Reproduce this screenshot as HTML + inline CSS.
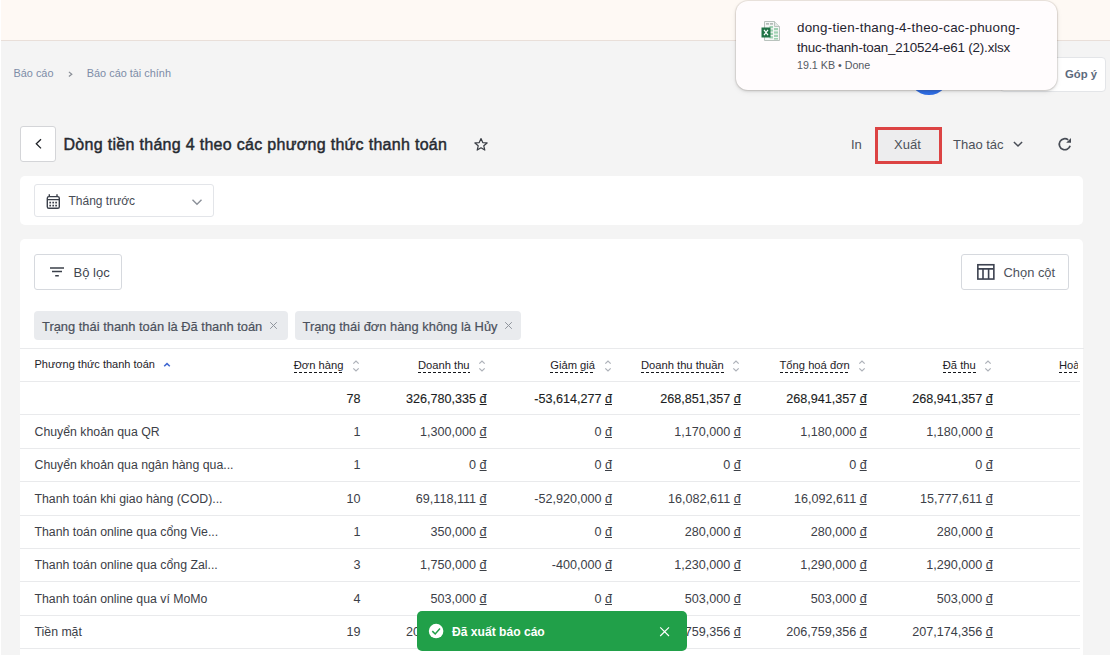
<!DOCTYPE html>
<html><head><meta charset="utf-8">
<style>
*{box-sizing:border-box;margin:0;padding:0}
html,body{width:1110px;height:655px;overflow:hidden}
body{position:relative;background:#f4f4f4;font-family:"Liberation Sans",sans-serif;color:#2a2e35}
.a{position:absolute}
.t{position:absolute;white-space:nowrap;line-height:1}
#strip{left:0;top:0;width:1px;height:655px;background:#fff}
#banner{left:1px;top:0;width:1109px;height:41px;background:#fef9f4;border-bottom:1px solid #e9dfd9}
.crumb{color:#7d8ca7;font-size:10.9px}
#gop{left:1000px;top:57px;width:106px;height:35px;background:#fff;border:1px solid #e3e5e8;border-radius:4px}
#gopt{left:1065px;top:68.5px;font-size:11.3px;font-weight:700;color:#5c6a7c}
#blue{left:907.6px;top:53px;width:42px;height:42px;border-radius:50%;background:#2f6de4}
#popup{left:736px;top:1px;width:321px;height:89px;background:#fffcfd;border-radius:12px;box-shadow:0 0 0 1px rgba(120,100,80,.10),0 1px 3px rgba(0,0,0,.18),0 2px 6px rgba(0,0,0,.06)}
.pl{color:#1f2430;font-size:13.4px}
#back{left:20px;top:126px;width:36px;height:36px;background:#fff;border:1px solid #d4d5d8;border-radius:3px}
#title{left:63.5px;font-size:16px;font-weight:400;letter-spacing:0.3px;-webkit-text-stroke:0.45px #262a31;color:#262a31}
.act{font-size:13px;color:#4c5159}
#xbox{left:875px;top:127px;width:67px;height:37px;border:3px solid #dc4343;background:#ededee}
.card{background:#fff;border-radius:5px}
#card1{left:20px;top:176px;width:1063px;height:49px}
#dd{left:34px;top:184px;width:180px;height:33px;border:1px solid #e3e5e9;border-radius:3px;background:#fff}
#card2{left:20px;top:239px;width:1063px;height:440px}
.btn{background:#fff;border:1px solid #d6d9de;border-radius:3px}
#fbtn{left:34px;top:254px;width:88px;height:36px}
#cbtn{left:961px;top:254px;width:108px;height:36px}
.chip{background:#e9ebee;border-radius:4px;height:28.5px;top:311.3px}
.chipt{font-size:12.9px;color:#4b515c;-webkit-text-stroke:0.2px #4b515c}
.chipx{font-size:13px;color:#8b9099}
.hl{background:#e9eaec;height:1px}
.hd{font-size:11.2px;color:#1e2228}
.hdr{padding-bottom:2px;background:repeating-linear-gradient(90deg,#15171b 0 3px,transparent 3px 5px) left bottom/100% 1px no-repeat}
.dash{height:1px;background:repeating-linear-gradient(90deg,#1e2228 0 3px,transparent 3px 4px)}
.num{font-size:12.6px;color:#3c4047;text-align:right}
.rt{font-size:12.3px;color:#3c4047}
.tot{color:#1b1d22;-webkit-text-stroke:0.12px #1b1d22}
u{text-decoration:underline;text-decoration-thickness:1px;text-underline-offset:0.8px}
#toast{left:417px;top:611px;width:270px;height:39.5px;background:#21a049;border-radius:5px}
</style></head><body>
<div id="strip" class="a"></div>
<div id="banner" class="a"></div>

<!-- breadcrumb -->
<div class="t crumb" style="left:13.5px;top:68.2px">Báo cáo</div>
<svg class="a" style="left:64px;top:68px" width="12" height="12" viewBox="0 0 12 12"><path d="M4.9 3.9 L7.8 6.2 L4.9 8.5" fill="none" stroke="#8a8f97" stroke-width="1.2"/></svg>
<div class="t crumb" style="left:86.8px;top:68.2px">Báo cáo tài chính</div>

<div id="gop" class="a"></div>
<div id="gopt" class="t">Góp ý</div>
<div id="blue" class="a"></div>

<!-- popup -->
<div id="popup" class="a"></div>

<!-- header row -->
<div id="back" class="a"></div>
<div id="title" class="t" style="top:136.9px">Dòng tiền tháng 4 theo các phương thức thanh toán</div>

<div class="t act" style="left:851px;top:138px">In</div>
<div id="xbox" class="a"></div>
<div class="t act" style="left:894px;top:138px">Xuất</div>
<div class="t act" style="left:953px;top:138px">Thao tác</div>

<div id="card1" class="a card"></div>
<div id="dd" class="a"></div>
<div class="t" style="left:68.5px;top:195px;font-size:12px;color:#474c55">Tháng trước</div>

<div id="card2" class="a card"></div>
<div id="fbtn" class="a btn"></div>
<div class="t" style="left:73.5px;top:266px;font-size:13px;color:#41464f">Bộ lọc</div>
<div id="cbtn" class="a btn"></div>
<div class="t" style="left:1003.5px;top:266.5px;font-size:12.9px;color:#4d525b">Chọn cột</div>

<div class="a chip" style="left:34px;width:254px"></div>
<div class="t chipt" style="left:42px;top:321px">Trạng thái thanh toán là Đã thanh toán</div>
<div class="a chip" style="left:295px;width:226px"></div>
<div class="t chipt" style="left:302.5px;top:321px">Trạng thái đơn hàng không là Hủy</div>


<!-- popup content -->
<svg class="a" style="left:760.7px;top:20.3px" width="20" height="22" viewBox="0 0 20 22">
 <path d="M3.5 1.5 H13.5 L18.5 6.5 V20.5 H3.5 Z" fill="#f4f6f5" stroke="#b9c2bd" stroke-width="1"/>
 <path d="M13.5 1.5 V6.5 H18.5" fill="#e3e7e5" stroke="#b9c2bd" stroke-width="1"/>
 <rect x="5" y="3.3" width="3" height="1.2" fill="#9aa39f"/><rect x="9" y="3.3" width="3" height="1.2" fill="#9aa39f"/>
 <g fill="#9fd1b2"><rect x="8.5" y="6" width="3.5" height="2.2"/><rect x="13" y="8" width="4" height="2.2"/><rect x="8.5" y="9.4" width="3.5" height="2.2"/><rect x="13" y="11.4" width="4" height="2.2"/><rect x="8.5" y="12.8" width="3.5" height="2.2"/><rect x="13" y="14.8" width="4" height="2.2"/><rect x="8.5" y="16.2" width="3.5" height="2.2"/><rect x="13" y="18" width="4" height="1.6"/></g>
 <rect x="0.5" y="7.5" width="9" height="10" fill="#217346"/>
 <path d="M3 9.8 L7 15.2 M7 9.8 L3 15.2" stroke="#fff" stroke-width="1.2"/>
</svg>
<div class="t pl" style="left:797px;top:21px;letter-spacing:0.24px">dong-tien-thang-4-theo-cac-phuong-</div>
<div class="t pl" style="left:797px;top:40.7px;letter-spacing:-0.19px">thuc-thanh-toan_210524-e61 (2).xlsx</div>
<div class="t" style="left:797px;top:59.5px;font-size:10.7px;color:#545a63">19.1 KB • Done</div>

<!-- icons header -->
<svg class="a" style="left:20px;top:126px" width="36" height="36" viewBox="0 0 36 36"><path d="M21 13.2 L16.3 17.8 L21 22.4" fill="none" stroke="#1d2026" stroke-width="1.3"/></svg>
<svg class="a" style="left:473px;top:137px" width="16" height="15" viewBox="0 0 16 15"><path d="M8 1.6 L9.75 5.6 L14.1 5.95 L10.8 8.8 L11.8 13.1 L8 10.8 L4.2 13.1 L5.2 8.8 L1.9 5.95 L6.25 5.6 Z" fill="none" stroke="#3a3e45" stroke-width="1.2" stroke-linejoin="round"/></svg>
<svg class="a" style="left:1012px;top:138px" width="12" height="12" viewBox="0 0 12 12"><path d="M1.9 4 L6 8 L10.1 4" fill="none" stroke="#474c55" stroke-width="1.5"/></svg>
<svg class="a" style="left:1056px;top:136px" width="17" height="17" viewBox="0 0 17 17"><path d="M14.1 9.7 A5.5 5.5 0 1 1 12.2 3.9" fill="none" stroke="#474c55" stroke-width="1.7"/><path d="M10.2 6.7 L15 6.7 L15 2.1 Z" fill="#474c55"/></svg>

<!-- dropdown icons -->
<svg class="a" style="left:44px;top:192px" width="20" height="20" viewBox="0 0 20 20"><rect x="3.3" y="4.6" width="12" height="11.7" rx="1.6" fill="none" stroke="#3b404a" stroke-width="1.4"/><path d="M3.3 7.65 H15.3 M5.3 2.2 V4.8 M13 2.2 V4.8" stroke="#3b404a" stroke-width="1.4"/><g fill="#3b404a"><rect x="5.35" y="9.75" width="1.7" height="1.7"/><rect x="8.35" y="9.75" width="1.7" height="1.7"/><rect x="11.25" y="9.75" width="1.7" height="1.7"/><rect x="5.35" y="12.75" width="1.7" height="1.7"/><rect x="8.35" y="12.75" width="1.7" height="1.7"/><rect x="11.25" y="12.75" width="1.7" height="1.7"/></g></svg>
<svg class="a" style="left:190.4px;top:196px" width="14" height="12" viewBox="0 0 14 12"><path d="M2.5 3.8 L7 8.3 L11.5 3.8" fill="none" stroke="#8b9099" stroke-width="1.4"/></svg>

<!-- filter icon -->
<svg class="a" style="left:49px;top:265px" width="16" height="13" viewBox="0 0 16 13"><path d="M1 3 H15 M3 6.6 H13 M6.2 10.7 H9.8" stroke="#3b404a" stroke-width="1.5"/></svg>
<!-- table icon -->
<svg class="a" style="left:976px;top:263px" width="20" height="18" viewBox="0 0 20 18"><rect x="1.85" y="1.75" width="16" height="14.3" fill="none" stroke="#3d4250" stroke-width="1.6"/><path d="M1.85 5.9 H17.85 M7 5.9 V16.05 M12.6 5.9 V16.05" stroke="#3d4250" stroke-width="1.6"/></svg>

<!-- chip x -->
<svg class="a" style="left:268px;top:320px" width="11" height="11" viewBox="0 0 11 11"><path d="M2.2 2.2 L8.8 8.8 M8.8 2.2 L2.2 8.8" stroke="#8f949c" stroke-width="1"/></svg>
<svg class="a" style="left:503px;top:320px" width="11" height="11" viewBox="0 0 11 11"><path d="M2.2 2.2 L8.8 8.8 M8.8 2.2 L2.2 8.8" stroke="#8f949c" stroke-width="1"/></svg>

<!--TABLE-->
<div class="a" style="left:20px;top:348px;width:1064px;height:1px;background:#e9eaec"></div>
<div class="t hd" style="left:34.5px;top:359.12px;font-size:11px">Phương thức thanh toán</div>
<svg class="a" style="left:162px;top:361px" width="10" height="8" viewBox="0 0 10 8"><path d="M2.2 5.3 L5 2.6 L7.8 5.3" fill="none" stroke="#3f67d2" stroke-width="1.5"/></svg>
<div class="t hd hdr" style="right:766.60px;top:360.12px">Đơn hàng</div>
<svg class="a" style="left:351.10px;top:358px" width="10" height="16" viewBox="0 0 10 16"><path d="M2.3 5.6 L5 3 L7.7 5.6 M2.3 10.4 L5 13 L7.7 10.4" fill="none" stroke="#aeb2b9" stroke-width="1.25"/></svg>
<div class="t hd hdr" style="right:640.40px;top:360.12px">Doanh thu</div>
<svg class="a" style="left:477.30px;top:358px" width="10" height="16" viewBox="0 0 10 16"><path d="M2.3 5.6 L5 3 L7.7 5.6 M2.3 10.4 L5 13 L7.7 10.4" fill="none" stroke="#aeb2b9" stroke-width="1.25"/></svg>
<div class="t hd hdr" style="right:515.00px;top:360.12px">Giảm giá</div>
<svg class="a" style="left:602.70px;top:358px" width="10" height="16" viewBox="0 0 10 16"><path d="M2.3 5.6 L5 3 L7.7 5.6 M2.3 10.4 L5 13 L7.7 10.4" fill="none" stroke="#aeb2b9" stroke-width="1.25"/></svg>
<div class="t hd hdr" style="right:386.30px;top:360.12px">Doanh thu thuần</div>
<svg class="a" style="left:731.40px;top:358px" width="10" height="16" viewBox="0 0 10 16"><path d="M2.3 5.6 L5 3 L7.7 5.6 M2.3 10.4 L5 13 L7.7 10.4" fill="none" stroke="#aeb2b9" stroke-width="1.25"/></svg>
<div class="t hd hdr" style="right:260.30px;top:360.12px">Tổng hoá đơn</div>
<svg class="a" style="left:857.40px;top:358px" width="10" height="16" viewBox="0 0 10 16"><path d="M2.3 5.6 L5 3 L7.7 5.6 M2.3 10.4 L5 13 L7.7 10.4" fill="none" stroke="#aeb2b9" stroke-width="1.25"/></svg>
<div class="t hd hdr" style="right:134.30px;top:360.12px">Đã thu</div>
<svg class="a" style="left:983.40px;top:358px" width="10" height="16" viewBox="0 0 10 16"><path d="M2.3 5.6 L5 3 L7.7 5.6 M2.3 10.4 L5 13 L7.7 10.4" fill="none" stroke="#aeb2b9" stroke-width="1.25"/></svg>
<div class="t hd hdr" style="left:1059px;top:360.12px;width:19px;overflow:hidden">Hoà</div>
<div class="a hl" style="left:20px;top:381.00px;width:1060px"></div>
<div class="a hl" style="left:20px;top:414.38px;width:1060px"></div>
<div class="a hl" style="left:20px;top:447.75px;width:1060px"></div>
<div class="a hl" style="left:20px;top:481.12px;width:1060px"></div>
<div class="a hl" style="left:20px;top:514.50px;width:1060px"></div>
<div class="a hl" style="left:20px;top:547.88px;width:1060px"></div>
<div class="a hl" style="left:20px;top:581.25px;width:1060px"></div>
<div class="a hl" style="left:20px;top:614.62px;width:1060px"></div>
<div class="a hl" style="left:20px;top:648.00px;width:1060px"></div>
<div class="t num tot" style="right:749.60px;top:392.53px">78</div>
<div class="t num tot" style="right:623.40px;top:392.53px">326,780,335 <u>đ</u></div>
<div class="t num tot" style="right:498.00px;top:392.53px">-53,614,277 <u>đ</u></div>
<div class="t num tot" style="right:369.30px;top:392.53px">268,851,357 <u>đ</u></div>
<div class="t num tot" style="right:243.30px;top:392.53px">268,941,357 <u>đ</u></div>
<div class="t num tot" style="right:117.30px;top:392.53px">268,941,357 <u>đ</u></div>
<div class="t rt" style="left:34.5px;top:425.96px">Chuyển khoản qua QR</div>
<div class="t num" style="right:749.60px;top:425.91px">1</div>
<div class="t num" style="right:623.40px;top:425.91px">1,300,000 <u>đ</u></div>
<div class="t num" style="right:498.00px;top:425.91px">0 <u>đ</u></div>
<div class="t num" style="right:369.30px;top:425.91px">1,170,000 <u>đ</u></div>
<div class="t num" style="right:243.30px;top:425.91px">1,180,000 <u>đ</u></div>
<div class="t num" style="right:117.30px;top:425.91px">1,180,000 <u>đ</u></div>
<div class="t rt" style="left:34.5px;top:459.34px">Chuyển khoản qua ngân hàng qua...</div>
<div class="t num" style="right:749.60px;top:459.28px">1</div>
<div class="t num" style="right:623.40px;top:459.28px">0 <u>đ</u></div>
<div class="t num" style="right:498.00px;top:459.28px">0 <u>đ</u></div>
<div class="t num" style="right:369.30px;top:459.28px">0 <u>đ</u></div>
<div class="t num" style="right:243.30px;top:459.28px">0 <u>đ</u></div>
<div class="t num" style="right:117.30px;top:459.28px">0 <u>đ</u></div>
<div class="t rt" style="left:34.5px;top:492.71px">Thanh toán khi giao hàng (COD)...</div>
<div class="t num" style="right:749.60px;top:492.66px">10</div>
<div class="t num" style="right:623.40px;top:492.66px">69,118,111 <u>đ</u></div>
<div class="t num" style="right:498.00px;top:492.66px">-52,920,000 <u>đ</u></div>
<div class="t num" style="right:369.30px;top:492.66px">16,082,611 <u>đ</u></div>
<div class="t num" style="right:243.30px;top:492.66px">16,092,611 <u>đ</u></div>
<div class="t num" style="right:117.30px;top:492.66px">15,777,611 <u>đ</u></div>
<div class="t rt" style="left:34.5px;top:526.09px">Thanh toán online qua cổng Vie...</div>
<div class="t num" style="right:749.60px;top:526.03px">1</div>
<div class="t num" style="right:623.40px;top:526.03px">350,000 <u>đ</u></div>
<div class="t num" style="right:498.00px;top:526.03px">0 <u>đ</u></div>
<div class="t num" style="right:369.30px;top:526.03px">280,000 <u>đ</u></div>
<div class="t num" style="right:243.30px;top:526.03px">280,000 <u>đ</u></div>
<div class="t num" style="right:117.30px;top:526.03px">280,000 <u>đ</u></div>
<div class="t rt" style="left:34.5px;top:559.46px">Thanh toán online qua cổng Zal...</div>
<div class="t num" style="right:749.60px;top:559.41px">3</div>
<div class="t num" style="right:623.40px;top:559.41px">1,750,000 <u>đ</u></div>
<div class="t num" style="right:498.00px;top:559.41px">-400,000 <u>đ</u></div>
<div class="t num" style="right:369.30px;top:559.41px">1,230,000 <u>đ</u></div>
<div class="t num" style="right:243.30px;top:559.41px">1,290,000 <u>đ</u></div>
<div class="t num" style="right:117.30px;top:559.41px">1,290,000 <u>đ</u></div>
<div class="t rt" style="left:34.5px;top:592.84px">Thanh toán online qua ví MoMo</div>
<div class="t num" style="right:749.60px;top:592.78px">4</div>
<div class="t num" style="right:623.40px;top:592.78px">503,000 <u>đ</u></div>
<div class="t num" style="right:498.00px;top:592.78px">0 <u>đ</u></div>
<div class="t num" style="right:369.30px;top:592.78px">503,000 <u>đ</u></div>
<div class="t num" style="right:243.30px;top:592.78px">503,000 <u>đ</u></div>
<div class="t num" style="right:117.30px;top:592.78px">503,000 <u>đ</u></div>
<div class="t rt" style="left:34.5px;top:626.21px">Tiền mặt</div>
<div class="t num" style="right:749.60px;top:626.16px">19</div>
<div class="t num" style="right:623.40px;top:626.16px">206,936,224 <u>đ</u></div>
<div class="t num" style="right:498.00px;top:626.16px">-414,000 <u>đ</u></div>
<div class="t num" style="right:369.30px;top:626.16px">206,759,356 <u>đ</u></div>
<div class="t num" style="right:243.30px;top:626.16px">206,759,356 <u>đ</u></div>
<div class="t num" style="right:117.30px;top:626.16px">207,174,356 <u>đ</u></div>
<!--/TABLE-->
<div id="toast" class="a"></div>

<svg class="a" style="left:428px;top:623px" width="17" height="17" viewBox="0 0 17 17"><circle cx="8.1" cy="8.05" r="7.3" fill="#fff"/><path d="M4.3 8.1 L7.2 11 L12 5.6" fill="none" stroke="#21a049" stroke-width="1.5"/></svg>
<div class="t" style="left:452px;top:625.5px;font-size:12.1px;font-weight:700;color:#fff">Đã xuất báo cáo</div>
<svg class="a" style="left:658px;top:625px" width="13" height="13" viewBox="0 0 13 13"><path d="M2.2 2.4 L11 11 M11 2.4 L2.2 11" stroke="#fff" stroke-width="1.15"/></svg>
</body></html>
